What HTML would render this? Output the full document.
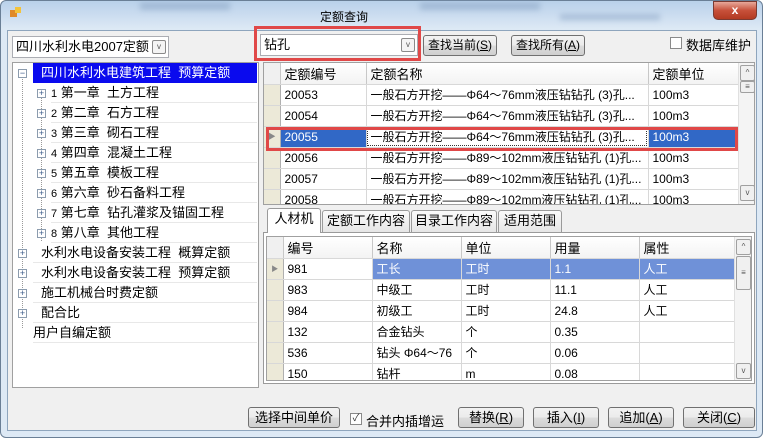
<!DOCTYPE html>
<html><head><meta charset="utf-8"><style>
*{box-sizing:border-box;margin:0;padding:0}
body{width:770px;height:447px;overflow:hidden;background:#fff;font-family:"Liberation Sans","Noto Sans CJK SC",sans-serif;font-size:12px;color:#000;position:relative}
.abs{position:absolute}
.win{left:0;top:0;width:763px;height:438px;border:1px solid #6a7f96;border-radius:6px;background:linear-gradient(#b9d1ea,#c6d9ee 10px,#dde9f5 28px);}
.body{left:7px;top:30px;width:750px;height:401px;background:#f0f0f0;border:1px solid #8ea5bd}
.blur{background:#8fa9c8;filter:blur(3px);opacity:.6}
.btn{position:absolute;height:21px;border:1px solid #707070;border-radius:3px;background:linear-gradient(#f2f2f2,#ebebeb 50%,#dcdcdc 51%,#cfcfcf);text-align:center;line-height:19px;font-size:12px}
.combo{position:absolute;height:22px;background:#fff;border:1px solid #abadb3;line-height:20px;padding-left:3px;font-size:13px}
.dd{position:absolute;right:2px;top:3px;width:14px;height:14px;border:1px solid #8a8a8a;border-radius:2px;background:#f4f4f4;font-size:8px;line-height:12px;text-align:center;color:#555}
.tree{left:12px;top:62px;width:247px;height:326px;background:#fff;border:1px solid #a0a0a0}
.tr{position:absolute;height:20px;line-height:19px;font-size:13px;border-bottom:1px solid #e8e8e8;white-space:nowrap}
.pm{position:absolute;width:9px;height:9px;border:1px solid #8c9cae;background:#fff;font-size:9px;line-height:7px;text-align:center;color:#3b5b8a}
table{border-collapse:collapse;position:absolute;table-layout:fixed}
td{height:21px;border-right:1px solid #d8d8d8;border-bottom:1px solid #d8d8d8;padding-left:4px;white-space:nowrap;overflow:hidden;font-size:12px}
tr.h td{background:linear-gradient(#fff,#f3f3f3);border-right:1px solid #c8c8c8;font-size:12px}
td.rh{background:#ece9d8;border-right:1px solid #b0b0b0;padding:0}
.sb{position:absolute;width:17px;background:#f4f4f4;border-left:1px solid #e0e0e0}
.sbb{position:absolute;left:1px;width:15px;height:16px;border:1px solid #a0a0a0;border-radius:2px;background:#f0f0f0;font-size:8px;text-align:center;line-height:14px;color:#555}
.tab{position:absolute;top:210px;height:22px;border:1px solid #9a9a9a;border-bottom:none;border-radius:3px 3px 0 0;background:linear-gradient(#fafafa,#e6e6e6);font-size:13px;line-height:20px;text-align:center}
</style></head><body>
<div class="abs win"></div>
<div class="abs blur" style="left:140px;top:2px;width:90px;height:8px"></div>
<div class="abs blur" style="left:420px;top:2px;width:120px;height:8px"></div>
<div class="abs blur" style="left:560px;top:14px;width:100px;height:6px"></div>
<div class="abs" style="left:10px;top:10px;width:7px;height:7px;background:#e08a2a"></div><div class="abs" style="left:15px;top:7px;width:6px;height:6px;background:#f3c33b"></div>
<div class="abs" style="left:320px;top:8px;font-size:12px">定额查询</div>
<div class="abs" style="left:713px;top:1px;width:44px;height:19px;border:1px solid #7a3a32;border-radius:0 0 5px 5px;background:linear-gradient(#e8a89a,#c7503a 50%,#b23a22);color:#fff;text-align:center;font-weight:bold;font-size:12px;line-height:17px">x</div>
<div class="abs body"></div>

<div class="combo" style="left:12px;top:36px;width:157px">四川水利水电2007定额<div class="dd">v</div></div>
<div class="combo" style="left:260px;top:34px;width:158px">钻孔<div class="dd">v</div></div>
<div class="abs" style="left:254px;top:26px;width:167px;height:35px;border:3px solid #e04848"></div>
<div class="btn" style="left:423px;top:35px;width:74px">查找当前(<u>S</u>)</div>
<div class="btn" style="left:511px;top:35px;width:74px">查找所有(<u>A</u>)</div>
<div class="abs" style="left:670px;top:37px;width:12px;height:12px;border:1px solid #8a8a8a;background:#fff"></div>
<div class="abs" style="left:686px;top:35px;font-size:13px">数据库维护</div>

<div class="abs tree">
<div class="abs" style="left:9px;top:10px;width:0;height:255px;border-left:1px dotted #999"></div>
<div class="abs" style="left:28px;top:28px;width:0;height:150px;border-left:1px dotted #999"></div>
<div class="pm" style="left:5px;top:6px">−</div>
<div class="tr" style="left:20px;top:0;width:224px;background:#0a0aee;color:#fff;padding-left:8px;border:none">四川水利水电建筑工程&nbsp; 预算定额</div>
<div class="tr" style="left:38px;top:20px;width:206px"><span style="font-size:11px">1</span> 第一章&nbsp; 土方工程</div>
<div class="tr" style="left:38px;top:40px;width:206px"><span style="font-size:11px">2</span> 第二章&nbsp; 石方工程</div>
<div class="tr" style="left:38px;top:60px;width:206px"><span style="font-size:11px">3</span> 第三章&nbsp; 砌石工程</div>
<div class="tr" style="left:38px;top:80px;width:206px"><span style="font-size:11px">4</span> 第四章&nbsp; 混凝土工程</div>
<div class="tr" style="left:38px;top:100px;width:206px"><span style="font-size:11px">5</span> 第五章&nbsp; 模板工程</div>
<div class="tr" style="left:38px;top:120px;width:206px"><span style="font-size:11px">6</span> 第六章&nbsp; 砂石备料工程</div>
<div class="tr" style="left:38px;top:140px;width:206px"><span style="font-size:11px">7</span> 第七章&nbsp; 钻孔灌浆及锚固工程</div>
<div class="tr" style="left:38px;top:160px;width:206px"><span style="font-size:11px">8</span> 第八章&nbsp; 其他工程</div>
<div class="pm" style="left:24px;top:26px">+</div><div class="pm" style="left:24px;top:46px">+</div><div class="pm" style="left:24px;top:66px">+</div><div class="pm" style="left:24px;top:86px">+</div><div class="pm" style="left:24px;top:106px">+</div><div class="pm" style="left:24px;top:126px">+</div><div class="pm" style="left:24px;top:146px">+</div><div class="pm" style="left:24px;top:166px">+</div>
<div class="tr" style="left:20px;top:180px;width:224px;padding-left:8px">水利水电设备安装工程&nbsp; 概算定额</div>
<div class="tr" style="left:20px;top:200px;width:224px;padding-left:8px">水利水电设备安装工程&nbsp; 预算定额</div>
<div class="tr" style="left:20px;top:220px;width:224px;padding-left:8px">施工机械台时费定额</div>
<div class="tr" style="left:20px;top:240px;width:224px;padding-left:8px">配合比</div>
<div class="tr" style="left:20px;top:260px;width:224px">用户自编定额</div>
<div class="pm" style="left:5px;top:186px">+</div><div class="pm" style="left:5px;top:206px">+</div><div class="pm" style="left:5px;top:226px">+</div><div class="pm" style="left:5px;top:246px">+</div>
</div>

<div class="abs" style="left:263px;top:62px;width:492px;height:143px;background:#fff;border:1px solid #a0a0a0;overflow:hidden">
<table style="left:0;top:0;width:474px">
<colgroup><col style="width:16px"><col style="width:86px"><col style="width:282px"><col style="width:90px"></colgroup>
<tr class="h"><td class="rh" style="background:#f0f0f0"></td><td style="font-size:13px">定额编号</td><td style="font-size:13px">定额名称</td><td style="font-size:13px">定额单位</td></tr>
<tr><td class="rh"></td><td>20053</td><td>一般石方开挖——Φ64～76mm液压钻钻孔 (3)孔...</td><td>100m3</td></tr>
<tr><td class="rh"></td><td>20054</td><td>一般石方开挖——Φ64～76mm液压钻钻孔 (3)孔...</td><td>100m3</td></tr>
<tr><td class="rh" style="color:#888;font-size:8px;text-align:center">▶</td><td style="background:#3168c6;color:#fff">20055</td><td style="outline:1px dotted #333;outline-offset:-2px">一般石方开挖——Φ64～76mm液压钻钻孔 (3)孔...</td><td style="background:#3168c6;color:#fff">100m3</td></tr>
<tr><td class="rh"></td><td>20056</td><td>一般石方开挖——Φ89～102mm液压钻钻孔 (1)孔...</td><td>100m3</td></tr>
<tr><td class="rh"></td><td>20057</td><td>一般石方开挖——Φ89～102mm液压钻钻孔 (1)孔...</td><td>100m3</td></tr>
<tr><td class="rh"></td><td>20058</td><td>一般石方开挖——Φ89～102mm液压钻钻孔 (1)孔...</td><td>100m3</td></tr>
</table>
<div class="sb" style="left:474px;top:0;height:143px"><div class="sbb" style="top:2px">^</div><div class="sbb" style="top:18px;height:12px;line-height:9px">≡</div><div class="sbb" style="top:122px">v</div></div>
</div>
<div class="abs" style="left:266px;top:127px;width:472px;height:24px;border:3px solid #e04848"></div>

<div class="tab" style="left:267px;top:208px;height:25px;width:54px;background:#fff;z-index:2">人材机</div>
<div class="tab" style="left:322px;width:88px">定额工作内容</div>
<div class="tab" style="left:411px;width:86px">目录工作内容</div>
<div class="tab" style="left:498px;width:64px">适用范围</div>
<div class="abs" style="left:263px;top:232px;width:492px;height:152px;background:#fff;border:1px solid #9a9a9a"></div>
<div class="abs" style="left:266px;top:236px;width:486px;height:145px;border:1px solid #a0a0a0;background:#fff;overflow:hidden">
<table style="left:0;top:0;width:467px">
<colgroup><col style="width:16px"><col style="width:89px"><col style="width:89px"><col style="width:89px"><col style="width:89px"><col style="width:95px"></colgroup>
<tr class="h"><td class="rh" style="background:#f0f0f0"></td><td style="font-size:13px">编号</td><td style="font-size:13px">名称</td><td style="font-size:13px">单位</td><td style="font-size:13px">用量</td><td style="font-size:13px">属性</td></tr>
<tr><td class="rh" style="color:#888;font-size:7px;text-align:center">▶</td><td>981</td><td style="background:#6f91d8;color:#fff">工长</td><td style="background:#6f91d8;color:#fff">工时</td><td style="background:#6f91d8;color:#fff">1.1</td><td style="background:#6f91d8;color:#fff">人工</td></tr>
<tr><td class="rh"></td><td>983</td><td>中级工</td><td>工时</td><td>11.1</td><td>人工</td></tr>
<tr><td class="rh"></td><td>984</td><td>初级工</td><td>工时</td><td>24.8</td><td>人工</td></tr>
<tr><td class="rh"></td><td>132</td><td>合金钻头</td><td>个</td><td>0.35</td><td></td></tr>
<tr><td class="rh"></td><td>536</td><td>钻头 Φ64～76</td><td>个</td><td>0.06</td><td></td></tr>
<tr><td class="rh"></td><td>150</td><td>钻杆</td><td>m</td><td>0.08</td><td></td></tr>
</table>
<div class="sb" style="left:467px;top:0;height:145px"><div class="sbb" style="top:2px">^</div><div class="sbb" style="top:19px;height:34px;line-height:32px">≡</div><div class="sbb" style="top:126px">v</div></div>
</div>

<div class="btn" style="left:248px;top:407px;width:92px;font-size:13px">选择中间单价</div>
<div class="abs" style="left:350px;top:413px;width:12px;height:12px;border:1px solid #8a8a8a;background:#fff;font-size:10px;line-height:10px;text-align:center;color:#333">✓</div>
<div class="abs" style="left:366px;top:411px;font-size:13px">合并内插增运</div>
<div class="btn" style="left:458px;top:407px;width:66px;font-size:13px">替换(<u>R</u>)</div>
<div class="btn" style="left:533px;top:407px;width:66px;font-size:13px">插入(<u>I</u>)</div>
<div class="btn" style="left:608px;top:407px;width:66px;font-size:13px">追加(<u>A</u>)</div>
<div class="btn" style="left:683px;top:407px;width:72px;font-size:13px">关闭(<u>C</u>)</div>
</body></html>
